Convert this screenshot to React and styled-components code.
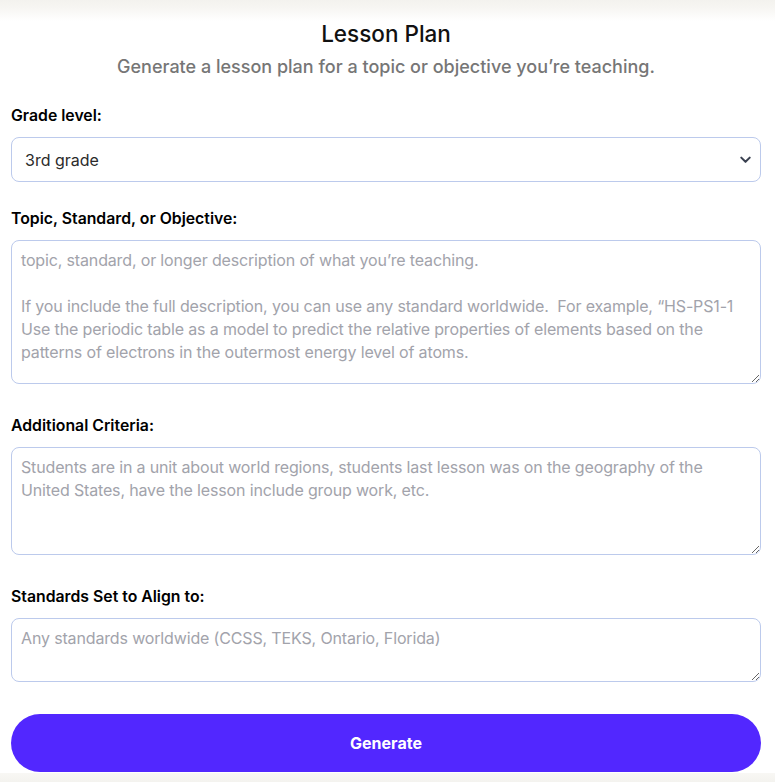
import React, { useState } from 'react'
import styled, { createGlobalStyle } from 'styled-components'

const GlobalStyle = createGlobalStyle`
    html, body {
        margin: 0;
        padding: 0;
        background: #fff;
        font-family: Inter, "Noto Sans", sans-serif;
    }
    * {
        box-sizing: border-box;
    }
`

function LessonPlanForm() {
    const [inputData, setInputData] = useState({
        grade: '3rd grade',
        topic: '',
        criteria: '',
        standards: '',
    })

    const { grade, topic, criteria, standards } = inputData

    const handleInputChange = name => e => {
        setInputData(prevState => ({
            ...prevState,
            [name]: e.target.value,
        }))
    }

    const handleSubmit = e => {
        e.preventDefault()
    }

    return (
        <PageStyled>
            <TopFade />
            <FormStyled onSubmit={handleSubmit}>
                <Header>
                    <h1>Lesson Plan</h1>
                    <p>Generate a lesson plan for a topic or objective you’re teaching.</p>
                </Header>

                <Field $space="27px">
                    <Label>Grade level:</Label>
                    <SelectWrap>
                        <Select value={grade} onChange={handleInputChange('grade')}>
                            <option value="Kindergarten">Kindergarten</option>
                            <option value="1st grade">1st grade</option>
                            <option value="2nd grade">2nd grade</option>
                            <option value="3rd grade">3rd grade</option>
                            <option value="4th grade">4th grade</option>
                            <option value="5th grade">5th grade</option>
                        </Select>
                        <Chevron viewBox="0 0 16 16" aria-hidden="true">
                            <path d="M3.5 6l4.5 4.5L12.5 6" />
                        </Chevron>
                    </SelectWrap>
                </Field>

                <Field>
                    <Label>Topic, Standard, or Objective:</Label>
                    <TextArea
                        $height="144px"
                        value={topic}
                        onChange={handleInputChange('topic')}
                        placeholder={'topic, standard, or longer description of what you’re teaching.\n\nIf you include the full description, you can use any standard worldwide.  For example, “HS-PS1-1 Use the periodic table as a model to predict the relative properties of elements based on the patterns of electrons in the outermost energy level of atoms.'}
                    />
                </Field>

                <Field>
                    <Label>Additional Criteria:</Label>
                    <TextArea
                        $height="108px"
                        value={criteria}
                        onChange={handleInputChange('criteria')}
                        placeholder="Students are in a unit about world regions, students last lesson was on the geography of the United States, have the lesson include group work, etc."
                    />
                </Field>

                <Field>
                    <Label>Standards Set to Align to:</Label>
                    <TextArea
                        $height="64px"
                        value={standards}
                        onChange={handleInputChange('standards')}
                        placeholder="Any standards worldwide (CCSS, TEKS, Ontario, Florida)"
                    />
                </Field>

                <GenerateButton type="submit">Generate</GenerateButton>
            </FormStyled>
            <BottomFade />
        </PageStyled>
    )
}

const PageStyled = styled.div`
    display: flex;
    flex-direction: column;
    min-height: 100vh;
    background: #fff;
`

const TopFade = styled.div`
    height: 21px;
    background: linear-gradient(to bottom, #f3f2ee 0%, #f7f6f3 40%, #ffffff 100%);
`

const BottomFade = styled.div`
    flex: 1;
    min-height: 9px;
    margin-top: 1px;
    background: linear-gradient(to bottom, #f8f7f4 0%, #f4f3ef 100%);
`

const FormStyled = styled.form`
    display: flex;
    flex-direction: column;
    padding: 0 14px 0 11px;
`

const Header = styled.div`
    display: flex;
    flex-direction: column;
    align-items: center;
    gap: 9px;
    margin-bottom: 27px;
    h1 {
        margin: 0;
        font-size: 22.5px;
        line-height: 25px;
        font-weight: 500;
        color: #111111;
    }
    p {
        margin: 0;
        font-size: 18px;
        line-height: 24px;
        font-weight: 500;
        color: #767676;
    }
`

const Field = styled.div`
    display: flex;
    flex-direction: column;
    gap: 11px;
    margin-bottom: ${props => props.$space || '32px'};
`

const Label = styled.label`
    font-size: 15.8px;
    line-height: 20px;
    font-weight: 600;
    color: #000;
`

const SelectWrap = styled.div`
    position: relative;
`

const Select = styled.select`
    display: block;
    width: 100%;
    height: 45px;
    padding: 0 40px 0 13px;
    font-family: inherit;
    font-size: 16px;
    color: #2b2b2b;
    background: #fff;
    border: 1px solid #bccaec;
    border-radius: 8px;
    outline: none;
    appearance: none;
    -webkit-appearance: none;
`

const Chevron = styled.svg`
    position: absolute;
    right: 8px;
    top: 15px;
    width: 15px;
    height: 15px;
    fill: none;
    stroke: #3a4150;
    stroke-width: 2.2;
    stroke-linecap: round;
    stroke-linejoin: round;
    pointer-events: none;
`

const TextArea = styled.textarea`
    display: block;
    width: 100%;
    height: ${props => props.$height};
    padding: 8px 9px;
    font-family: inherit;
    font-size: 16px;
    letter-spacing: -0.15px;
    line-height: 23px;
    color: #2b2b2b;
    background: #fff;
    border: 1px solid #bccaec;
    border-radius: 8px;
    outline: none;
    resize: vertical;
    &::placeholder {
        color: #a2a3ab;
    }
`

const GenerateButton = styled.button`
    height: 58px;
    width: 100%;
    border: none;
    border-radius: 29px;
    background: #5227ff;
    color: #fff;
    font-family: inherit;
    font-size: 16px;
    font-weight: 700;
    cursor: pointer;
`

export default function App() {
    return (
        <>
            <GlobalStyle />
            <LessonPlanForm />
        </>
    )
}
